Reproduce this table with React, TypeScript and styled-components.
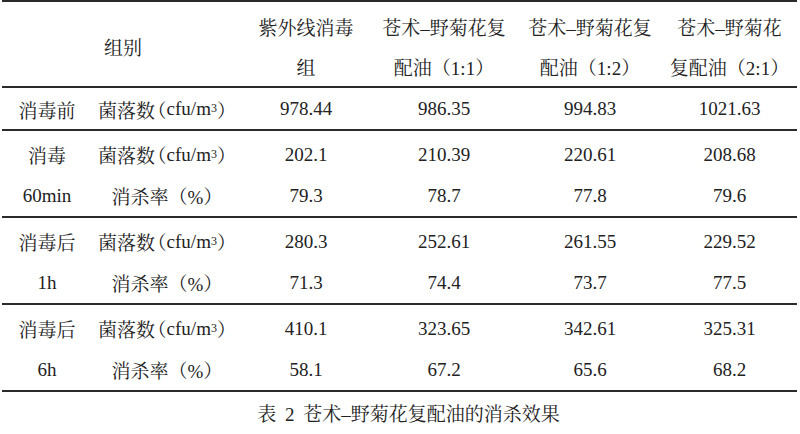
import React from 'react';
import styled, { createGlobalStyle } from 'styled-components';

const GlobalStyle = createGlobalStyle`
  body {
    margin: 0;
    background: #ffffff;
    color: #222222;
    font-family: "Liberation Serif", "Noto Serif CJK SC", "Noto Sans CJK SC", serif;
  }
`;

const COLS = '90px 150px 128px 148px 144px 135px';

const Page = styled.div`
  width: 795px;
  margin-left: 2px;
  display: flex;
  flex-direction: column;
`;

const Group = styled.div<{ $pad: number; $rowH: number; $top?: boolean }>`
  display: grid;
  grid-template-columns: ${COLS};
  grid-auto-rows: ${(p) => p.$rowH}px;
  padding-top: ${(p) => p.$pad}px;
  border-top: ${(p) => (p.$top ? '2px solid #2b2b2b' : 'none')};
  border-bottom: 2px solid #2b2b2b;
  font-size: 19px;
`;

const Cell = styled.div<{ $span?: number; $left?: boolean }>`
  display: flex;
  align-items: center;
  justify-content: ${(p) => (p.$left ? 'flex-start' : 'center')};
  padding-left: ${(p) => (p.$left ? '12px' : '0')};
  grid-row: ${(p) => (p.$span ? `span ${p.$span}` : 'auto')};
  white-space: nowrap;
`;

const Sup = styled.sup`
  font-size: 12px;
  line-height: 0;
  position: relative;
  top: -1px;
`;

const Paren = styled.span`
  font-feature-settings: "halt";
  padding-left: 2px;
`;

const Caption = styled.div`
  margin-top: 11px;
  padding-left: 18px;
  text-align: center;
  font-size: 19px;
  line-height: 24px;
  word-spacing: 4px;
`;

const Count = () => (
  <>
    菌落数<Paren>（</Paren>cfu/m<Sup>3</Sup>）
  </>
);

interface Row {
  label: [string, string];
  count: string[];
  rate: string[];
}

const rows: Row[] = [
  { label: ['消毒', '60min'], count: ['202.1', '210.39', '220.61', '208.68'], rate: ['79.3', '78.7', '77.8', '79.6'] },
  { label: ['消毒后', '1h'], count: ['280.3', '252.61', '261.55', '229.52'], rate: ['71.3', '74.4', '73.7', '77.5'] },
  { label: ['消毒后', '6h'], count: ['410.1', '323.65', '342.61', '325.31'], rate: ['58.1', '67.2', '65.6', '68.2'] },
];

const App = () => (
  <>
    <GlobalStyle />
    <Page>
      <Group $top $pad={4} $rowH={40}>
        <Cell $span={2} />
        <Cell $span={2} $left>
          组别
        </Cell>
        <Cell>紫外线消毒</Cell>
        <Cell>苍术–野菊花复</Cell>
        <Cell>苍术–野菊花复</Cell>
        <Cell>苍术–野菊花</Cell>
        <Cell>组</Cell>
        <Cell>配油（1:1）</Cell>
        <Cell>配油（1:2）</Cell>
        <Cell>复配油（2:1）</Cell>
      </Group>
      <Group $pad={1} $rowH={40}>
        <Cell>消毒前</Cell>
        <Cell>
          <Count />
        </Cell>
        <Cell>978.44</Cell>
        <Cell>986.35</Cell>
        <Cell>994.83</Cell>
        <Cell>1021.63</Cell>
      </Group>
      {rows.map((r, i) => (
        <Group key={i} $pad={3} $rowH={41}>
          <Cell>{r.label[0]}</Cell>
          <Cell>
            <Count />
          </Cell>
          {r.count.map((v, j) => (
            <Cell key={`c${j}`}>{v}</Cell>
          ))}
          <Cell>{r.label[1]}</Cell>
          <Cell>消杀率（%）</Cell>
          {r.rate.map((v, j) => (
            <Cell key={`r${j}`}>{v}</Cell>
          ))}
        </Group>
      ))}
      <Caption>表 2 苍术–野菊花复配油的消杀效果</Caption>
    </Page>
  </>
);

export default App;
